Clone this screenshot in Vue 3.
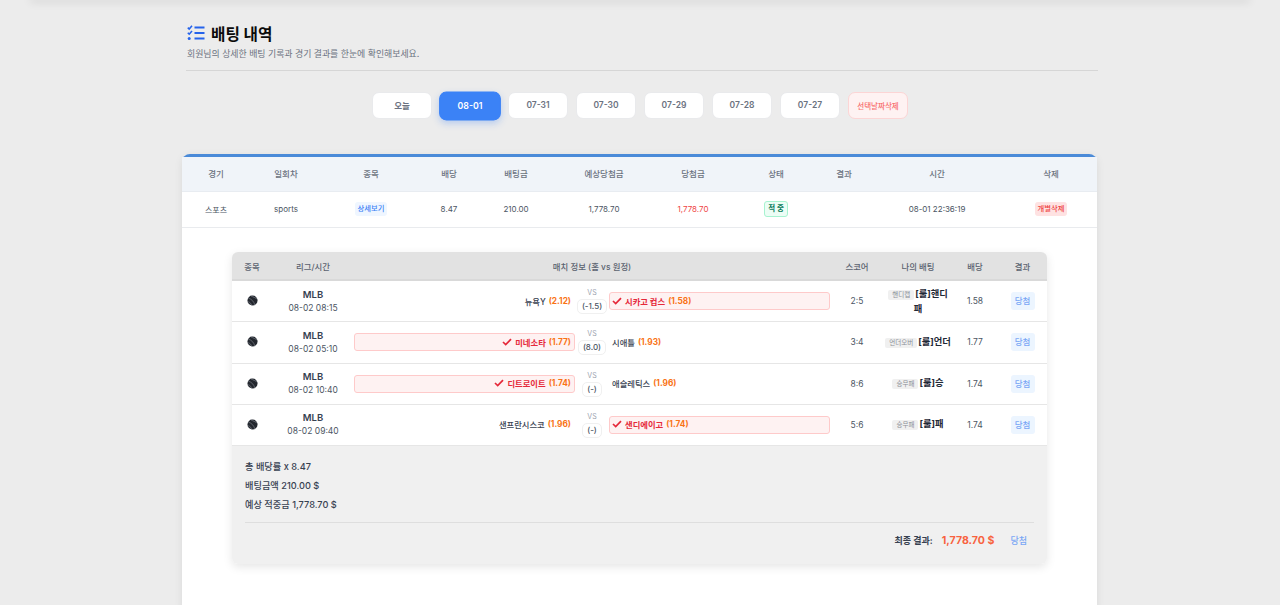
<template>
  <div class="page">
    <div class="topbar"></div>
    <div class="wrap">
      <div class="head">
        <h1>
          <svg class="title-icon" viewBox="0 0 18 16" width="18" height="16">
            <path d="M.8 2.6 2.2 4 5 .8M.8 7.8 2.2 9.2 5 6" fill="none" stroke="#2563eb" stroke-width="1.6" />
            <circle cx="2.2" cy="13.4" r="1.5" fill="#2563eb" />
            <path d="M7.5 2.6H17.5M7.5 8H17.5M7.5 13.4H17.5" stroke="#2563eb" stroke-width="2" />
          </svg>
          배팅 내역
        </h1>
        <p>회원님의 상세한 배팅 기록과 경기 결과를 한눈에 확인해보세요.</p>
      </div>

      <div class="dates">
        <button v-for="d in dates" :key="d" class="date" :class="{ active: d === '08-01' }">{{ d }}</button>
        <button class="date del">선택날짜삭제</button>
      </div>

      <div class="card">
        <div class="row top-head">
          <div v-for="c in columns" :key="c">{{ c }}</div>
        </div>
        <div class="row top-body">
          <div>스포츠</div>
          <div>sports</div>
          <div><span class="detail">상세보기</span></div>
          <div>8.47</div>
          <div>210.00</div>
          <div>1,778.70</div>
          <div class="red">1,778.70</div>
          <div><span class="hit">적 중</span></div>
          <div></div>
          <div>08-01 22:36:19</div>
          <div><span class="remove">개별삭제</span></div>
        </div>

        <div class="inner">
          <div class="m-row m-head">
            <div>종목</div>
            <div>리그/시간</div>
            <div>매치 정보 (홈 vs 원정)</div>
            <div>스코어</div>
            <div>나의 배팅</div>
            <div>배당</div>
            <div>결과</div>
          </div>
          <div v-for="m in matches" :key="m.time" class="m-row m-body">
            <div class="sport">
              <svg viewBox="0 0 12 12" width="11" height="11">
                <circle cx="6" cy="6" r="5.5" fill="#23272e" />
                <path d="M1.5 3.5C4.5 4 8 7.5 8.5 11M4 .8C7 2.5 10 3 11.5 5M1 7.5C3 7.5 4.5 9 5 11.5" fill="none" stroke="#80858e" stroke-width=".7" />
              </svg>
            </div>
            <div class="league">
              <strong>MLB</strong>
              <span>{{ m.time }}</span>
            </div>
            <div class="match">
              <div class="team home" :class="{ picked: m.pick === 'home' }">
                <svg v-if="m.pick === 'home'" class="check" viewBox="0 0 10 8" width="10" height="8">
                  <path d="M1 4 3.7 6.6 9 1.2" fill="none" stroke="#e5293a" stroke-width="1.7" />
                </svg>
                <span>{{ m.home }}</span><em>({{ m.homeOdds }})</em>
              </div>
              <div class="vs">
                <small>VS</small>
                <span>{{ m.line }}</span>
              </div>
              <div class="team away" :class="{ picked: m.pick === 'away' }">
                <svg v-if="m.pick === 'away'" class="check" viewBox="0 0 10 8" width="10" height="8">
                  <path d="M1 4 3.7 6.6 9 1.2" fill="none" stroke="#e5293a" stroke-width="1.7" />
                </svg>
                <span>{{ m.away }}</span><em>({{ m.awayOdds }})</em>
              </div>
            </div>
            <div>{{ m.score }}</div>
            <div class="bet">
              <span class="tag">{{ m.tag }}</span>
              <b>{{ m.bet }}</b>
            </div>
            <div>{{ m.odds }}</div>
            <div><span class="won">당첨</span></div>
          </div>

          <div class="summary">
            <p>총 배당률 x 8.47</p>
            <p>배팅금액 210.00 $</p>
            <p>예상 적중금 1,778.70 $</p>
            <div class="final">
              <span class="final-label">최종 결과:</span>
              <span class="final-amount">1,778.70 $</span>
              <span class="final-state">당첨</span>
            </div>
          </div>
        </div>
      </div>
    </div>
  </div>
</template>

<script setup>
const dates = ["오늘", "08-01", "07-31", "07-30", "07-29", "07-28", "07-27"];
const columns = ["경기", "일회차", "종목", "배당", "배팅금", "예상당첨금", "당첨금", "상태", "결과", "시간", "삭제"];

const matches = [
  { time: "08-02 08:15", home: "뉴욕Y", homeOdds: "2.12", away: "시카고 컵스", awayOdds: "1.58", line: "(-1.5)", pick: "away", score: "2:5", tag: "핸디캡", bet: "[룰]핸디패", odds: "1.58" },
  { time: "08-02 05:10", home: "미네소타", homeOdds: "1.77", away: "시애틀", awayOdds: "1.93", line: "(8.0)", pick: "home", score: "3:4", tag: "언더오버", bet: "[룰]언더", odds: "1.77" },
  { time: "08-02 10:40", home: "디트로이트", homeOdds: "1.74", away: "애슬레틱스", awayOdds: "1.96", line: "(-)", pick: "home", score: "8:6", tag: "승무패", bet: "[룰]승", odds: "1.74" },
  { time: "08-02 09:40", home: "샌프란시스코", homeOdds: "1.96", away: "샌디에이고", awayOdds: "1.74", line: "(-)", pick: "away", score: "5:6", tag: "승무패", bet: "[룰]패", odds: "1.74" },
];
</script>

<style>
html,
body {
  margin: 0;
  background: #ececec;
}
</style>

<style scoped>
* {
  box-sizing: border-box;
}

.page {
  height: 605px;
  overflow: hidden;
  background: #ececec;
  font-family: Inter, "Noto Sans CJK KR", sans-serif;
  color: #374151;
}

.topbar {
  height: 0;
  margin: 0 32px;
  box-shadow: 0 0 8px 2px rgba(0, 0, 0, 0.12);
}

.wrap {
  width: 916px;
  margin: 0 auto;
  padding-top: 22px;
}

.head {
  margin-left: 4px;
  padding-bottom: 11px;
  border-bottom: 1px solid #d6d6d6;
}

.head h1 {
  display: flex;
  align-items: center;
  gap: 6px;
  margin: 0;
  height: 22px;
  font-size: 15.7px;
  font-weight: 700;
  color: #0b0b0b;
}

.title-icon {
  margin-left: 1px;
}

.head p {
  margin: 4px 0 -1px 1px;
  font-size: 8.9px;
  line-height: 12px;
  color: #6b7280;
}

.dates {
  display: flex;
  justify-content: center;
  align-items: center;
  gap: 8px;
  height: 29px;
  margin-top: 20px;
}

.date {
  width: 60px;
  height: 27px;
  padding: 0 0 1px;
  border: 1px solid #e9eaec;
  border-radius: 7px;
  background: #fff;
  font-family: inherit;
  font-size: 8.5px;
  font-weight: 600;
  color: #6b7280;
}

.date.active {
  height: 28px;
  transform: scale(1.03);
  border-color: #3b82f6;
  background: #3b82f6;
  color: #fff;
  box-shadow: 0 3px 7px rgba(59, 130, 246, 0.3);
}

.date.del {
  border-color: #fcd5d5;
  background: #fef2f2;
  color: #f87171;
  font-size: 7.5px;
  font-weight: 500;
}

.card {
  width: 915px;
  height: 460px;
  margin-top: 34px;
  border-top: 3px solid #4a8ad8;
  border-radius: 8px;
  background: #fff;
  box-shadow: 0 2px 8px rgba(0, 0, 0, 0.08);
}

.row {
  display: grid;
  grid-template-columns: 68px 72px 98px 58px 76px 100px 78px 88px 48px 138px 90px;
  align-items: center;
  text-align: center;
}

.top-head {
  height: 35px;
  padding-bottom: 3px;
  background: #f0f4f9;
  border-bottom: 1px solid #e8ecf1;
  font-size: 8.5px;
  font-weight: 500;
  color: #6b7280;
}

.top-body {
  height: 36px;
  padding-bottom: 1px;
  border-bottom: 1px solid #e9ebee;
  font-size: 8px;
  color: #4b5563;
}

.red {
  color: #ef4444;
}

.detail {
  display: inline-block;
  padding: 1px 3px;
  border-radius: 3px;
  background: #eff6ff;
  color: #3b82f6;
  font-size: 7.3px;
  font-weight: 500;
  line-height: 11.3px;
}

.hit {
  display: inline-block;
  padding: 1px 3px;
  border: 1px solid #a7f3d0;
  border-radius: 3px;
  background: #ecfdf5;
  color: #047857;
  font-size: 7.5px;
  font-weight: 600;
  line-height: 12px;
}

.remove {
  display: inline-block;
  padding: 1px 3px;
  border-radius: 3px;
  background: #fee2e2;
  color: #ef4444;
  font-size: 7.3px;
  font-weight: 500;
  line-height: 11.3px;
}

.inner {
  width: 815px;
  margin: 24px 0 0 50px;
  border-radius: 6px;
  overflow: hidden;
  box-shadow: 0 3px 10px rgba(0, 0, 0, 0.1);
}

.m-row {
  display: grid;
  grid-template-columns: 40px 82px 476px 54px 68px 46px 49px;
  align-items: center;
  text-align: center;
  font-size: 8.5px;
}

.m-head {
  height: 29px;
  background: #e2e2e2;
  border-bottom: 2px solid #d9d9d9;
  font-size: 8.4px;
  font-weight: 500;
  color: #5b6270;
}

.m-body {
  height: 41.25px;
  background: #fff;
  border-bottom: 1px solid #e6e6e6;
  color: #4b5563;
}

.sport {
  display: flex;
  justify-content: center;
  padding-bottom: 1px;
}

.league {
  display: flex;
  flex-direction: column;
  gap: 1px;
  line-height: 13px;
}

.league strong {
  font-size: 9.5px;
  font-weight: 600;
  color: #374151;
}

.match {
  display: grid;
  grid-template-columns: 1fr 34px 1fr;
  align-items: center;
}

.team {
  display: flex;
  align-items: center;
  height: 18px;
  padding: 0 3px 1px 2px;
  border: 1px solid transparent;
  border-radius: 3px;
  font-size: 8.3px;
  font-weight: 500;
  color: #374151;
}

.team.home {
  justify-content: flex-end;
}

.team em {
  margin-left: 3px;
  font-style: normal;
  font-weight: 700;
  color: #f97316;
}

.team.picked {
  border-color: #fecaca;
  background: #fef2f2;
  color: #e5293a;
  font-weight: 700;
}

.check {
  margin-right: 3px;
}

.vs {
  display: flex;
  flex-direction: column;
  align-items: center;
  gap: 2px;
}

.vs small {
  font-size: 7px;
  line-height: 9px;
  color: #9ca3af;
}

.vs span {
  padding: 0 4px;
  border: 1px solid #f0f0f0;
  border-radius: 5px;
  font-size: 8px;
  line-height: 13px;
  font-weight: 500;
  color: #4b5563;
}

.bet {
  display: block;
  line-height: 13px;
}

.tag {
  padding: 1px 4px;
  border-radius: 2px;
  background: #f0f0f0;
  color: #8b8f97;
  font-size: 6.5px;
}

.bet b {
  margin-left: 1px;
  font-size: 9.3px;
  font-weight: 700;
  color: #1f2937;
}

.won {
  display: inline-block;
  width: 24px;
  height: 18px;
  border-radius: 3px;
  background: #ecf5ff;
  color: #7aa7f5;
  line-height: 18px;
  font-size: 8.5px;
  font-weight: 500;
}

.summary {
  height: 118px;
  padding: 14px 13px 0;
  background: #f0f0f0;
}

.summary p {
  margin: 0 0 6px;
  font-size: 9.2px;
  line-height: 13px;
  font-weight: 500;
  color: #374151;
}

.final {
  display: flex;
  justify-content: flex-end;
  align-items: center;
  height: 36px;
  margin-top: 11px;
  padding-right: 7px;
  border-top: 1px solid #dedede;
}

.final-label {
  font-size: 9px;
  font-weight: 600;
  color: #374151;
}

.final-amount {
  margin: 0 16px 0 9px;
  font-size: 10.6px;
  font-weight: 700;
  color: #f8623f;
}

.final-state {
  font-size: 9px;
  font-weight: 500;
  color: #7aa7f5;
}
</style>
